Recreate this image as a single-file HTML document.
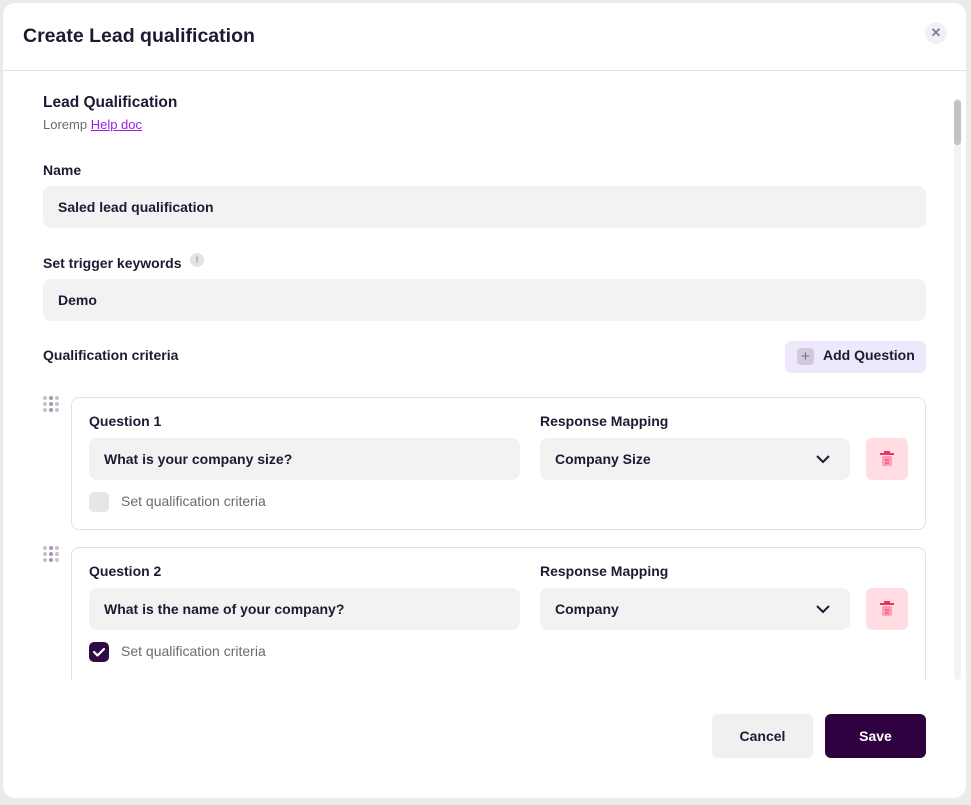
<!DOCTYPE html>
<html><head><style>
*{box-sizing:border-box;margin:0;padding:0}
body{width:971px;height:805px;background:#ebebeb;font-family:"Liberation Sans",sans-serif;color:#1d1a33;position:relative;overflow:hidden}
.m{position:absolute;left:3px;top:3px;width:963px;height:795px;background:#fff;border-radius:12px}
.a{position:absolute}
.b{font-weight:bold;font-size:14px}
.in{position:absolute;background:#f2f2f2;border-radius:8px;font-weight:bold;font-size:14px;padding-left:15px;display:flex;align-items:center}
.card{position:absolute;left:71px;width:855px;border:1px solid #e2dfe8;border-radius:8px;background:#fff}
.dots{position:absolute;display:grid;grid-template-columns:repeat(3,4px);gap:2px}
.dots i{width:4px;height:4px;border-radius:50%;background:#c9bfd0}
.dots i:nth-child(3n+2){background:#a797b1}
.trash{position:absolute;left:866px;width:42px;height:42px;background:#ffdde3;border-radius:6px}
.cb{position:absolute;left:89px;width:20px;height:20px;border-radius:5px}
.cl{position:absolute;left:121px;font-size:14px;color:#6b6b6b}
</style></head><body>
<div class="m"></div>
<div class="a" style="left:23px;top:25px;font-size:19.5px;font-weight:bold">Create Lead qualification</div>
<div class="a" style="left:925px;top:22px;width:22px;height:22px;border-radius:50%;background:#f3f0f5;color:#8a7a9a;font-size:13px;text-align:center;line-height:22px;font-weight:bold">✕</div>
<div class="a" style="left:3px;top:70px;width:963px;height:1px;background:#e3e3e3"></div>
<div class="a" style="left:954px;top:98px;width:7px;height:582px;background:#f3f3f3;border-radius:4px"></div>
<div class="a" style="left:954px;top:100px;width:7px;height:45px;background:#c2c2c2;border-radius:4px"></div>
<div style="position:absolute;left:0;top:0;width:971px;height:680px;overflow:hidden">
<div class="a" style="left:43px;top:94px;font-size:15.5px;font-weight:bold">Lead Qualification</div>
<div class="a" style="left:43px;top:117px;font-size:13px;color:#6b6b6b">Loremp <span style="color:#9b1fe0;text-decoration:underline">Help doc</span></div>
<div class="a b" style="left:43px;top:162px">Name</div>
<div class="in" style="left:43px;top:186px;width:883px;height:42px">Saled lead qualification</div>
<div class="a b" style="left:43px;top:255px">Set trigger keywords</div>
<div class="a" style="left:190px;top:253px;width:14px;height:14px;border-radius:50%;background:#e3e3e3;color:#999;font-size:9px;text-align:center;line-height:14px;font-weight:bold">!</div>
<div class="in" style="left:43px;top:279px;width:883px;height:42px">Demo</div>
<div class="a b" style="left:43px;top:347px">Qualification criteria</div>
<div class="a" style="left:785px;top:341px;width:141px;height:32px;background:#ede8fb;border-radius:6px"></div>
<div class="a" style="left:797px;top:348px;width:17px;height:17px;background:#d3c8dc;border-radius:4px;color:#7a6a8a;text-align:center;line-height:17px;font-size:15px">+</div>
<div class="a b" style="left:823px;top:347px">Add Question</div>

<div class="dots" style="left:43px;top:396px"><i></i><i></i><i></i><i></i><i></i><i></i><i></i><i></i><i></i></div>
<div class="card" style="top:397px;height:133px"></div>
<div class="a b" style="left:89px;top:413px">Question 1</div>
<div class="a b" style="left:540px;top:413px">Response Mapping</div>
<div class="in" style="left:89px;top:438px;width:431px;height:42px">What is your company size?</div>
<div class="in" style="left:540px;top:438px;width:310px;height:42px">Company Size</div>
<svg class="a" style="left:815px;top:453px" width="16" height="12"><path d="M2 3l6 6 6-6" stroke="#1d1a33" stroke-width="2" fill="none"/></svg>
<div class="trash" style="top:438px"></div>
<svg class="a" style="left:878px;top:450px" width="18" height="18"><path d="M2 4h14" stroke="#f0325a" stroke-width="2"/><rect x="6" y="1" width="6" height="3" fill="#f0325a"/><rect x="4" y="6" width="10" height="10" rx="2" fill="#ff9eb2"/><path d="M7 10h4M7 13h4" stroke="#f0325a" stroke-width="1"/></svg>
<div class="cb" style="top:492px;background:#e6e6e6"></div>
<div class="cl" style="top:493px">Set qualification criteria</div>

<div class="dots" style="left:43px;top:546px"><i></i><i></i><i></i><i></i><i></i><i></i><i></i><i></i><i></i></div>
<div class="card" style="top:547px;height:150px"></div>
<div class="a b" style="left:89px;top:563px">Question 2</div>
<div class="a b" style="left:540px;top:563px">Response Mapping</div>
<div class="in" style="left:89px;top:588px;width:431px;height:42px">What is the name of your company?</div>
<div class="in" style="left:540px;top:588px;width:310px;height:42px">Company</div>
<svg class="a" style="left:815px;top:603px" width="16" height="12"><path d="M2 3l6 6 6-6" stroke="#1d1a33" stroke-width="2" fill="none"/></svg>
<div class="trash" style="top:588px"></div>
<svg class="a" style="left:878px;top:600px" width="18" height="18"><path d="M2 4h14" stroke="#f0325a" stroke-width="2"/><rect x="6" y="1" width="6" height="3" fill="#f0325a"/><rect x="4" y="6" width="10" height="10" rx="2" fill="#ff9eb2"/><path d="M7 10h4M7 13h4" stroke="#f0325a" stroke-width="1"/></svg>
<div class="cb" style="top:642px;background:#2e0b45"></div>
<svg class="a" style="left:89px;top:642px" width="20" height="20"><path d="M5 10l3.5 3.5L15 7" stroke="#fff" stroke-width="2.2" fill="none" stroke-linecap="round" stroke-linejoin="round"/></svg>
<div class="cl" style="top:643px">Set qualification criteria</div>
</div>

<div class="a b" style="left:712px;top:714px;width:101px;height:44px;background:#f0f0f0;border-radius:6px;text-align:center;line-height:44px">Cancel</div>
<div class="a b" style="left:825px;top:714px;width:101px;height:44px;background:#2e0040;color:#fff;border-radius:6px;text-align:center;line-height:44px">Save</div>
</body></html>
